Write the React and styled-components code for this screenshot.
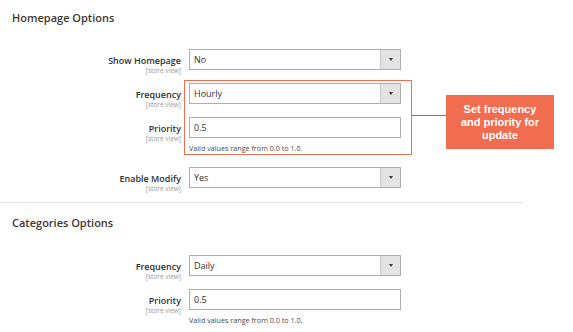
import styled, { createGlobalStyle } from 'styled-components';

const GlobalStyle = createGlobalStyle`
  html, body {
    margin: 0;
    padding: 0;
    background: #fff;
  }
  body {
    font-family: "Open Sans", "Liberation Sans", sans-serif;
    color: #303030;
  }
`;

const Page = styled.div`
  position: relative;
  width: 573px;
  height: 332px;
  overflow: hidden;
  background: #fff;
`;

const Section = styled.section`
  padding: ${({ $top }) => $top}px 0 0 12px;
  width: 511px;
  border-bottom: ${({ $divider }) => ($divider ? '1px solid #e3e3e3' : 'none')};
  padding-bottom: ${({ $divider }) => ($divider ? '14px' : '0')};
`;

const Heading = styled.h2`
  margin: 0;
  font-size: 11px;
  line-height: 14px;
  font-weight: 600;
  color: #41362f;
`;

const Rows = styled.div`
  display: flex;
  flex-direction: column;
  gap: 13px;
  margin-top: ${({ $gap }) => $gap}px;
`;

const Row = styled.div`
  display: flex;
  align-items: flex-start;
  gap: 8px;
`;

/* label block hangs a few px below the control, like Magento's admin form */
const LabelCol = styled.div`
  width: 169px;
  height: 21px;
  box-sizing: border-box;
  text-align: right;
  padding-top: 6px;
`;

const LabelText = styled.div`
  font-size: 9px;
  line-height: 12px;
  font-weight: 600;
  color: #303030;
`;

const Scope = styled.div`
  font-size: 6.5px;
  line-height: 7px;
  color: #999;
`;

const Control = styled.div`
  width: 212px;
`;

const Select = styled.div`
  display: flex;
  height: 21px;
  box-sizing: border-box;
  border: 1px solid #adadad;
  background: #fff;
`;

const Value = styled.div`
  flex: 1;
  padding-left: 4px;
  font-size: 9px;
  line-height: 19px;
  color: #303030;
`;

const Toggle = styled.div`
  width: 19px;
  background: #e3e3e3;
  border-left: 1px solid #c9c9c9;
  display: flex;
  align-items: center;
  justify-content: center;

  &::after {
    content: '';
    border-left: 2.5px solid transparent;
    border-right: 2.5px solid transparent;
    border-top: 3px solid #41362f;
  }
`;

const Input = styled.div`
  height: 21px;
  box-sizing: border-box;
  border: 1px solid #adadad;
  padding-left: 4px;
  font-size: 9px;
  line-height: 19px;
  color: #303030;
`;

const Note = styled.div`
  margin-top: 4px;
  font-size: 7.2px;
  line-height: 12px;
  color: #4a4a4a;
`;

const Highlight = styled.div`
  position: absolute;
  left: 184px;
  top: 80px;
  width: 228px;
  height: 75px;
  box-sizing: border-box;
  border: 1.5px solid #f0704f;
`;

const Connector = styled.div`
  position: absolute;
  left: 412px;
  top: 115px;
  width: 34px;
  height: 1px;
  background: #7a7a7a;
`;

const Callout = styled.div`
  position: absolute;
  left: 446px;
  top: 95px;
  width: 108px;
  height: 54px;
  background: #f26c4f;
  color: #fff;
  display: flex;
  align-items: center;
  justify-content: center;
  text-align: center;
  font-family: "Liberation Sans", Arial, sans-serif;
  font-weight: 700;
  font-size: 11px;
  line-height: 13px;
`;

const Field = ({ label, children }) => (
  <Row>
    <LabelCol>
      <LabelText>{label}</LabelText>
      <Scope>[store view]</Scope>
    </LabelCol>
    <Control>{children}</Control>
  </Row>
);

const Dropdown = ({ value }) => (
  <Select>
    <Value>{value}</Value>
    <Toggle />
  </Select>
);

const App = () => (
  <Page>
    <GlobalStyle />
    <Section $top={11} $divider>
      <Heading>Homepage Options</Heading>
      <Rows $gap={24}>
        <Field label="Show Homepage">
          <Dropdown value="No" />
        </Field>
        <Field label="Frequency">
          <Dropdown value="Hourly" />
        </Field>
        <Field label="Priority">
          <Input>0.5</Input>
          <Note>Valid values range from 0.0 to 1.0.</Note>
        </Field>
        <Field label="Enable Modify">
          <Dropdown value="Yes" />
        </Field>
      </Rows>
    </Section>
    <Section $top={13}>
      <Heading>Categories Options</Heading>
      <Rows $gap={25}>
        <Field label="Frequency">
          <Dropdown value="Daily" />
        </Field>
        <Field label="Priority">
          <Input>0.5</Input>
          <Note>Valid values range from 0.0 to 1.0.</Note>
        </Field>
      </Rows>
    </Section>
    <Highlight />
    <Connector />
    <Callout>
      Set frequency
      <br />
      and priority for
      <br />
      update
    </Callout>
  </Page>
);

export default App;
